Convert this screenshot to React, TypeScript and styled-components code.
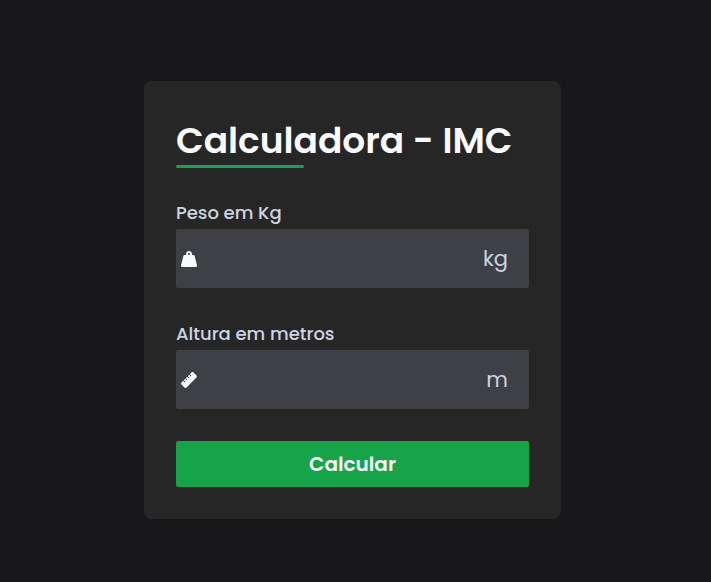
import React from "react";
import styled, { createGlobalStyle } from "styled-components";
import { FaWeightHanging, FaRuler } from "react-icons/fa6";

const GlobalStyle = createGlobalStyle`
  *, *::before, *::after { box-sizing: border-box; }
  body {
    margin: 0;
    background: #18181b;
    color: #f8fafc;
    font-family: Poppins, Inter, "Open Sans", sans-serif;
  }
`;

const Page = styled.main`
  min-height: 100vh;
  display: flex;
  align-items: center;
  justify-content: center;
  padding: 32px 22px 14px 16px;
`;

const Card = styled.form`
  width: 100%;
  max-width: 417px;
  padding: 32px;
  background: #262626;
  border-radius: 8px;
`;

const Title = styled.h1`
  margin: 0 0 31px;
  font-size: 36px;
  line-height: 56px;
  font-weight: 600;
  white-space: nowrap;

  &::after {
    content: "";
    display: block;
    width: 128px;
    height: 3px;
    margin-top: -4px;
    border-radius: 2px;
    background: #16a34a;
  }
`;

const Field = styled.div`
  margin-bottom: 32px;
`;

const Label = styled.label`
  display: block;
  margin-bottom: 3px;
  font-size: 18px;
  line-height: 27px;
  font-weight: 500;
  color: #cbd5e1;
`;

const InputBox = styled.div`
  display: flex;
  align-items: center;
  height: 59px;
  padding: 0 21px 0 5px;
  background: #3f3f46;
  border-radius: 2px;
`;

const Input = styled.input`
  flex: 1;
  min-width: 0;
  height: 100%;
  padding: 0 8px;
  border: 0;
  outline: 0;
  background: transparent;
  color: #f8fafc;
  font: inherit;
  font-size: 20px;
`;

const Unit = styled.span`
  font-size: 21px;
  line-height: 33px;
  color: #cbd5e1;
`;

const Button = styled.button`
  display: block;
  width: 100%;
  height: 46px;
  border: 0;
  border-radius: 2px;
  background: #16a34a;
  color: #f8fafc;
  font: inherit;
  font-size: 20px;
  font-weight: 600;
`;

export default function App() {
  return (
    <>
      <GlobalStyle />
      <Page>
        <Card onSubmit={(e: React.FormEvent) => e.preventDefault()}>
          <Title>Calculadora - IMC</Title>
          <Field>
            <Label htmlFor="peso">Peso em Kg</Label>
            <InputBox>
              <FaWeightHanging size={16} aria-hidden />
              <Input id="peso" inputMode="decimal" />
              <Unit>kg</Unit>
            </InputBox>
          </Field>
          <Field>
            <Label htmlFor="altura">Altura em metros</Label>
            <InputBox>
              <FaRuler size={16} aria-hidden />
              <Input id="altura" inputMode="decimal" />
              <Unit>m</Unit>
            </InputBox>
          </Field>
          <Button type="submit">Calcular</Button>
        </Card>
      </Page>
    </>
  );
}
